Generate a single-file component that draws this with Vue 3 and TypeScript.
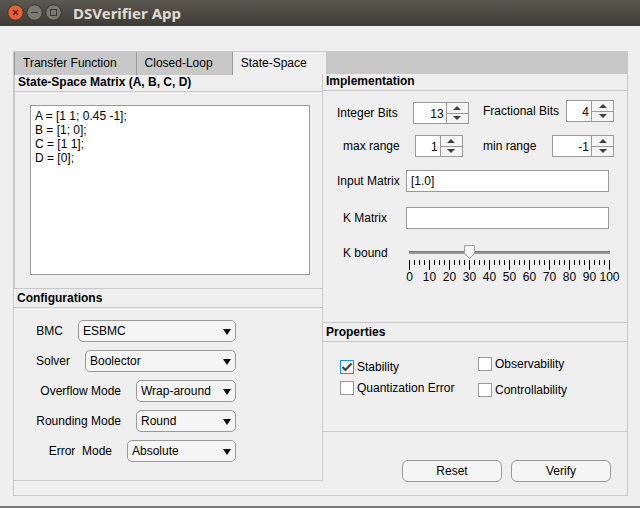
<script setup lang="ts">
import { reactive, ref } from 'vue'

interface SpinField {
  id: string
  label: string
  value: number
  size: string
  indent?: boolean
}

interface Choice {
  id: string
  label: string
  options: string[]
  value: string
  size: string
}

interface Property {
  id: string
  label: string
  checked: boolean
}

const tabs = ['Transfer Function', 'Closed-Loop', 'State-Space']
const activeTab = ref('State-Space')

const matrices = ref('A = [1 1; 0.45 -1];\nB = [1; 0];\nC = [1 1];\nD = [0];')

const choices = reactive<Choice[]>([
  { id: 'bmc', label: 'BMC', options: ['ESBMC', 'CBMC'], value: 'ESBMC', size: 'widest' },
  { id: 'solver', label: 'Solver', options: ['Boolector', 'Z3'], value: 'Boolector', size: 'wide' },
  { id: 'overflow', label: 'Overflow Mode', options: ['Wrap-around', 'Saturate'], value: 'Wrap-around', size: 'regular' },
  { id: 'rounding', label: 'Rounding Mode', options: ['Round', 'Floor'], value: 'Round', size: 'regular' },
  { id: 'error', label: 'Error  Mode', options: ['Absolute', 'Relative'], value: 'Absolute', size: 'medium' },
])

const spinColumns = reactive<SpinField[][]>([
  [
    { id: 'integer-bits', label: 'Integer Bits', value: 13, size: 'large' },
    { id: 'max-range', label: 'max range', value: 1, size: 'small', indent: true },
  ],
  [
    { id: 'fractional-bits', label: 'Fractional Bits', value: 4, size: 'small' },
    { id: 'min-range', label: 'min range', value: -1, size: 'larger' },
  ],
])

const inputMatrix = ref('[1.0]')
const kMatrix = ref('')
const kBound = ref(30)
const ticks = Array.from({ length: 41 }, (_, i) => i)
const marks = Array.from({ length: 11 }, (_, i) => i * 10)

const propertyColumns = reactive<Property[][]>([
  [
    { id: 'stability', label: 'Stability', checked: true },
    { id: 'quantization', label: 'Quantization Error', checked: false },
  ],
  [
    { id: 'observability', label: 'Observability', checked: false },
    { id: 'controllability', label: 'Controllability', checked: false },
  ],
])
</script>

<template>
  <div class="window">
    <header class="titlebar">
      <button class="win-btn" type="button" aria-label="Close">
        <svg width="17" height="17" viewBox="0 0 17 17">
          <circle cx="8.5" cy="8.5" r="7.700" fill="#ea5f35" stroke="#37352f" />
          <path d="M6 6l5 5M11 6l-5 5" stroke="#4b2214" stroke-width="1.3" />
        </svg>
      </button>
      <button class="win-btn" type="button" aria-label="Minimize">
        <svg width="17" height="17" viewBox="0 0 17 17">
          <circle cx="8.5" cy="8.5" r="7.700" fill="#7b7971" stroke="#37352f" />
          <path d="M5 8.5h7" stroke="#3b3934" />
        </svg>
      </button>
      <button class="win-btn" type="button" aria-label="Maximize">
        <svg width="17" height="17" viewBox="0 0 17 17">
          <circle cx="8.5" cy="8.5" r="7.700" fill="#7b7971" stroke="#37352f" />
          <rect x="5.5" y="5.5" width="6" height="6" fill="none" stroke="#3b3934" />
        </svg>
      </button>
      <h1>DSVerifier App</h1>
    </header>

    <main class="content">
      <div class="frame">
        <nav class="tabs" role="tablist">
          <button
            v-for="tab in tabs"
            :key="tab"
            type="button"
            role="tab"
            class="tab"
            :class="{ active: tab === activeTab }"
            :aria-selected="tab === activeTab"
            @click="activeTab = tab"
          >{{ tab }}</button>
        </nav>

        <div class="columns">
          <div class="left">
            <section class="matrix-panel">
              <h2 id="matrix-title">State-Space Matrix (A, B, C, D)</h2>
              <div class="matrix-body">
                <textarea v-model="matrices" aria-labelledby="matrix-title" spellcheck="false"></textarea>
              </div>
            </section>

            <section>
              <h2 class="tall">Configurations</h2>
              <div class="choices">
                <div v-for="c in choices" :key="c.id" class="choice">
                  <label :for="c.id">{{ c.label }}</label>
                  <div class="select" :class="c.size">
                    <select :id="c.id" v-model="c.value">
                      <option v-for="o in c.options" :key="o">{{ o }}</option>
                    </select>
                    <svg class="arrow" width="8" height="6" viewBox="0 0 8 6"><path d="M0 0h8l-4 6z" fill="#0a0606" /></svg>
                  </div>
                </div>
              </div>
            </section>
          </div>

          <div class="right">
            <section class="ruled">
              <h2>Implementation</h2>
              <div class="implementation">
                <div class="spins">
                  <div v-for="(column, i) in spinColumns" :key="i" class="spin-column">
                    <div v-for="s in column" :key="s.id" class="spin-field" :class="{ indent: s.indent }">
                      <label :for="s.id">{{ s.label }}</label>
                      <div class="spin" :class="s.size">
                        <input :id="s.id" v-model.number="s.value" type="number" />
                        <div class="steps">
                          <button type="button" :aria-label="'Increase ' + s.label" @click="s.value++">
                            <svg width="8" height="4" viewBox="0 0 8 4"><path d="M0 4l4-4 4 4z" fill="#404040" /></svg>
                          </button>
                          <button type="button" :aria-label="'Decrease ' + s.label" @click="s.value--">
                            <svg width="8" height="4" viewBox="0 0 8 4"><path d="M0 0l4 4 4-4z" fill="#404040" /></svg>
                          </button>
                        </div>
                      </div>
                    </div>
                  </div>
                </div>

                <div class="line">
                  <label for="input-matrix">Input Matrix</label>
                  <input id="input-matrix" v-model="inputMatrix" class="text" type="text" />
                </div>
                <div class="line indent">
                  <label for="k-matrix">K Matrix</label>
                  <input id="k-matrix" v-model="kMatrix" class="text" type="text" />
                </div>
                <div class="line indent bound">
                  <label for="k-bound">K bound</label>
                  <div class="slider">
                    <div class="rail">
                      <div class="track"></div>
                      <input id="k-bound" v-model.number="kBound" type="range" min="0" max="100" />
                      <svg class="thumb" :style="{ left: kBound + '%' }" width="11" height="14" viewBox="0 0 11 14">
                        <path d="M.5.5h10v8l-5 5-5-5z" fill="#f7f7f7" stroke="#a0a0a0" />
                      </svg>
                    </div>
                    <div class="ticks">
                      <i v-for="t in ticks" :key="t" :class="{ major: t % 4 === 0 }"></i>
                    </div>
                    <div class="marks">
                      <span v-for="m in marks" :key="m">{{ m }}</span>
                    </div>
                  </div>
                </div>
              </div>
            </section>

            <section class="ruled">
              <h2 class="tall">Properties</h2>
              <div class="properties">
                <div v-for="(column, i) in propertyColumns" :key="i" class="property-column">
                  <label v-for="p in column" :key="p.id" class="check">
                    <input v-model="p.checked" type="checkbox" />
                    <svg v-if="p.checked" class="tick" width="14" height="14" viewBox="0 0 14 14">
                      <path d="M2.5 7l3 3 6-6.500" fill="none" stroke="#404040" stroke-width="2.2" />
                    </svg>
                    <span>{{ p.label }}</span>
                  </label>
                </div>
              </div>
            </section>

            <div class="actions">
              <button type="button">Reset</button>
              <button type="button">Verify</button>
            </div>
          </div>
        </div>
      </div>
    </main>
  </div>
</template>

<style>
body {
  margin: 0;
  background: #efefef;
}
</style>

<style scoped>
.window,
.window * {
  box-sizing: border-box;
}

.window {
  min-height: 100vh;
  display: flex;
  flex-direction: column;
  background: #efefef;
  border-bottom: 2px solid #777;
  color: #000;
  font: 12px/14px "Liberation Sans", Arial, sans-serif;
}

button,
input,
select,
textarea {
  margin: 0;
  font: inherit;
  color: inherit;
}

.titlebar {
  display: flex;
  align-items: center;
  gap: 2px;
  height: 26px;
  padding: 0 7px 1px;
  background: linear-gradient(#5b584f, #3d3b36);
}

.win-btn {
  display: flex;
  padding: 0;
  border: 0;
  background: none;
}

.titlebar h1 {
  margin: 0 0 0 9px;
  font: bold 15px/20px "Noto Sans", sans-serif;
  color: #dfdbd2;
}

.content {
  padding: 25px 12px 10px 13px;
}

.frame {
  border: 1px solid #c8c8c8;
}

.tabs {
  display: flex;
  height: 22px;
  background: #c8c8c8;
}

.tab {
  height: 23px;
  padding: 0 19px 2px 8px;
  border: 0;
  border-left: 1px solid #999;
  background: #c8c8c8;
  white-space: nowrap;
}

.tab.active {
  background: #efefef;
}

.columns {
  display: grid;
  grid-template-columns: 309fr 304fr;
  align-items: start;
}

.left {
  padding-top: 1px;
  border-right: 1px solid #c8c8c8;
  border-bottom: 1px solid #c8c8c8;
}

h2 {
  margin: 0;
  padding: 0 3px 2px;
  border-bottom: 1px solid #c8c8c8;
  font-size: 12px;
  line-height: 14px;
  font-weight: bold;
}

h2.tall {
  padding: 2px 3px;
}

.matrix-panel {
  border-left: 1px solid #c8c8c8;
  border-bottom: 1px solid #c8c8c8;
}

.matrix-body {
  padding: 13px 12px 13px 15px;
}

textarea {
  display: block;
  width: 100%;
  height: 170px;
  padding: 3px 4px;
  border: 1px solid #999;
  border-radius: 0;
  background: #fff;
  resize: none;
  outline: none;
}

.choices {
  display: flex;
  flex-direction: column;
  gap: 8px;
  width: 222px;
  padding: 12px 0 18px;
}

.choice {
  display: flex;
  align-items: center;
  justify-content: flex-end;
  gap: 15px;
  white-space: pre;
}

.select {
  position: relative;
}

.select.widest {
  width: 158px;
}

.select.wide {
  width: 151px;
}

.select.medium {
  width: 109px;
}

.select.regular {
  width: 100px;
}

select {
  display: block;
  appearance: none;
  width: 100%;
  height: 22px;
  padding: 0 4px;
  border: 1px solid #999;
  border-radius: 5px;
  background: #f5f5f5;
}

.arrow {
  position: absolute;
  top: 9px;
  right: 5px;
  pointer-events: none;
}

.ruled {
  border-bottom: 1px solid #c8c8c8;
}

.implementation {
  padding: 9px 0 38px 14px;
}

.spins {
  display: flex;
  align-items: flex-end;
  gap: 14px;
  margin-bottom: 13px;
}

.spin-column {
  display: flex;
  flex-direction: column;
  gap: 11px;
  width: 132px;
}

.spin-column + .spin-column {
  gap: 13px;
  width: 131px;
}

.spin-field {
  display: flex;
  align-items: center;
  gap: 15px;
  white-space: nowrap;
}

.spin-column + .spin-column .spin-field {
  gap: 0;
  justify-content: space-between;
}

.indent {
  padding-left: 6px;
}

.spin {
  display: flex;
  height: 22px;
  border: 1px solid #999;
  background: #fff;
}

.spin.small {
  width: 48px;
}

.spin.large {
  width: 56px;
}

.spin.larger {
  width: 62px;
}

.spin input {
  appearance: textfield;
  flex: 1;
  width: 0;
  min-width: 0;
  padding: 2px 2px 0;
  border: 0;
  background: none;
  text-align: right;
  outline: none;
}

.spin input::-webkit-inner-spin-button {
  appearance: none;
  margin: 0;
}

.steps {
  display: flex;
  flex-direction: column;
  width: 22px;
  border-left: 1px solid #999;
}

.steps button {
  display: flex;
  flex: 1;
  align-items: center;
  justify-content: center;
  padding: 0;
  border: 0;
  background: #f5f5f5;
}

.steps button + button {
  border-top: 1px solid #999;
}

.line {
  display: grid;
  grid-template-columns: 69px 1fr;
  align-items: center;
  padding-right: 18px;
}

.line.indent {
  grid-template-columns: 63px 1fr;
  margin-top: 15px;
}

.text {
  width: 100%;
  height: 22px;
  padding: 0 4px;
  border: 1px solid #999;
  background: #fff;
  outline: none;
}

.line.bound {
  align-items: start;
  padding-right: 17px;
}

.slider {
  margin-left: 3px;
  padding-top: 1px;
}

.bound label {
  padding-top: 2px;
}

.rail {
  position: relative;
  height: 15px;
  padding-top: 6px;
}

.track {
  height: 3px;
  border-top: 1px solid #777;
  background: #999;
}

.rail input {
  position: absolute;
  inset: 0;
  width: 100%;
  height: 100%;
  opacity: 0;
}

.thumb {
  position: absolute;
  top: 0;
  margin-left: -5px;
  pointer-events: none;
}

.ticks {
  display: flex;
  justify-content: space-between;
  height: 10px;
}

.ticks i {
  width: 1px;
  height: 5px;
  background: #000;
}

.ticks .major {
  height: 10px;
}

.marks {
  display: flex;
  justify-content: space-between;
}

.marks span {
  display: flex;
  justify-content: center;
  width: 1px;
}

.properties {
  display: flex;
  align-items: center;
  gap: 18px;
  height: 89px;
  padding: 0 0 19px 17px;
}

.property-column {
  display: flex;
  flex-direction: column;
  gap: 7px;
  width: 120px;
}

.property-column + .property-column {
  gap: 12px;
}

.check {
  position: relative;
  display: flex;
  align-items: center;
  gap: 3px;
  white-space: nowrap;
}

.check input {
  appearance: none;
  width: 14px;
  height: 14px;
  border: 1px solid #999;
  background: #fff;
}

.check input:checked {
  border-color: #0f96ff;
}

.tick {
  position: absolute;
  top: 0;
  left: 0;
  pointer-events: none;
}

.actions {
  display: flex;
  justify-content: flex-end;
  gap: 9px;
  padding: 28px 16px 13px 0;
}

.actions button {
  width: 100px;
  height: 22px;
  padding: 0;
  border: 1px solid #999;
  border-radius: 6px;
  background: #f5f5f5;
}
</style>
